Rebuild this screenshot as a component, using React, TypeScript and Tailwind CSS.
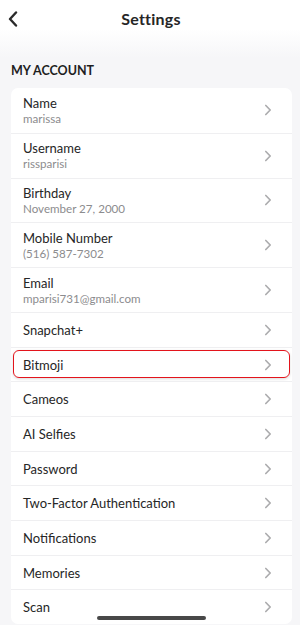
import React from "react";

const Chevron = () => (
  <svg width="8" height="12" viewBox="0 0 8 12" className="shrink-0">
    <path d="M1.8 1.5 L6.2 6 L1.8 10.5" fill="none" stroke="#acacae" strokeWidth="1.7" strokeLinecap="round" strokeLinejoin="round" />
  </svg>
);

type Item = { title: string; sub?: string; highlight?: boolean };

const items: Item[] = [
  { title: "Name", sub: "marissa" },
  { title: "Username", sub: "rissparisi" },
  { title: "Birthday", sub: "November 27, 2000" },
  { title: "Mobile Number", sub: "(516) 587-7302" },
  { title: "Email", sub: "mparisi731@gmail.com" },
  { title: "Snapchat+" },
  { title: "Bitmoji", highlight: true },
  { title: "Cameos" },
  { title: "AI Selfies" },
  { title: "Password" },
  { title: "Two-Factor Authentication" },
  { title: "Notifications" },
  { title: "Memories" },
  { title: "Scan" },
];

export default function App() {
  return (
    <div
      className="relative w-[300px] h-[625px] overflow-hidden bg-[#f6f6f8]"
      style={{ fontFamily: "Lato, 'Noto Sans', sans-serif" }}
    >
      <div className="bg-gradient-to-b from-white via-white to-[#f6f6f8] h-[58px] flex flex-col">
        <div className="relative h-[38px] flex items-center justify-center">
          <svg width="10" height="16" viewBox="0 0 10 16" className="absolute left-[8px] top-[11px]">
            <path d="M8 1.5 L2 8 L8 14.5" fill="none" stroke="#2a2a2a" strokeWidth="2.4" strokeLinecap="round" strokeLinejoin="round" />
          </svg>
          <span className="text-[16px] font-bold text-[#262626] tracking-[0.2px] ml-[2px]">Settings</span>
        </div>
      </div>
      <div className="pl-[11px] h-[26px] flex items-start">
        <span className="text-[12.5px] font-bold text-[#1f1f1f] leading-[14px] mt-[6px]">MY ACCOUNT</span>
      </div>
      <div className="ml-[11px] w-[281px] bg-white rounded-[7px] overflow-hidden mt-[4px]">
        {items.map((it, i) => (
          <div
            key={it.title}
            className={`relative flex items-center pl-[12px] pr-[20px] ${it.sub ? "h-[44.8px]" : "h-[34.7px]"} ${i > 0 ? "border-t border-[#efeff1]" : ""}`}
          >
            <div className="flex-1 flex flex-col">
              <span className="text-[13px] leading-[16px] text-[#262626]">{it.title}</span>
              {it.sub && (
                <span className="text-[11.6px] leading-[14px] text-[#8c8c8e] mt-[1px]">{it.sub}</span>
              )}
            </div>
            <Chevron />
            {it.highlight && (
              <div className="absolute left-[2px] right-[2px] top-[2px] bottom-[3px] rounded-[6px] border-[1.5px] border-[#e3141c] shadow-[0_1px_3px_rgba(0,0,0,0.15)]" />
            )}
          </div>
        ))}
      </div>
      <div className="absolute left-[97px] top-[616px] w-[109px] h-[3.5px] rounded-full bg-[#484848]" />
    </div>
  );
}
